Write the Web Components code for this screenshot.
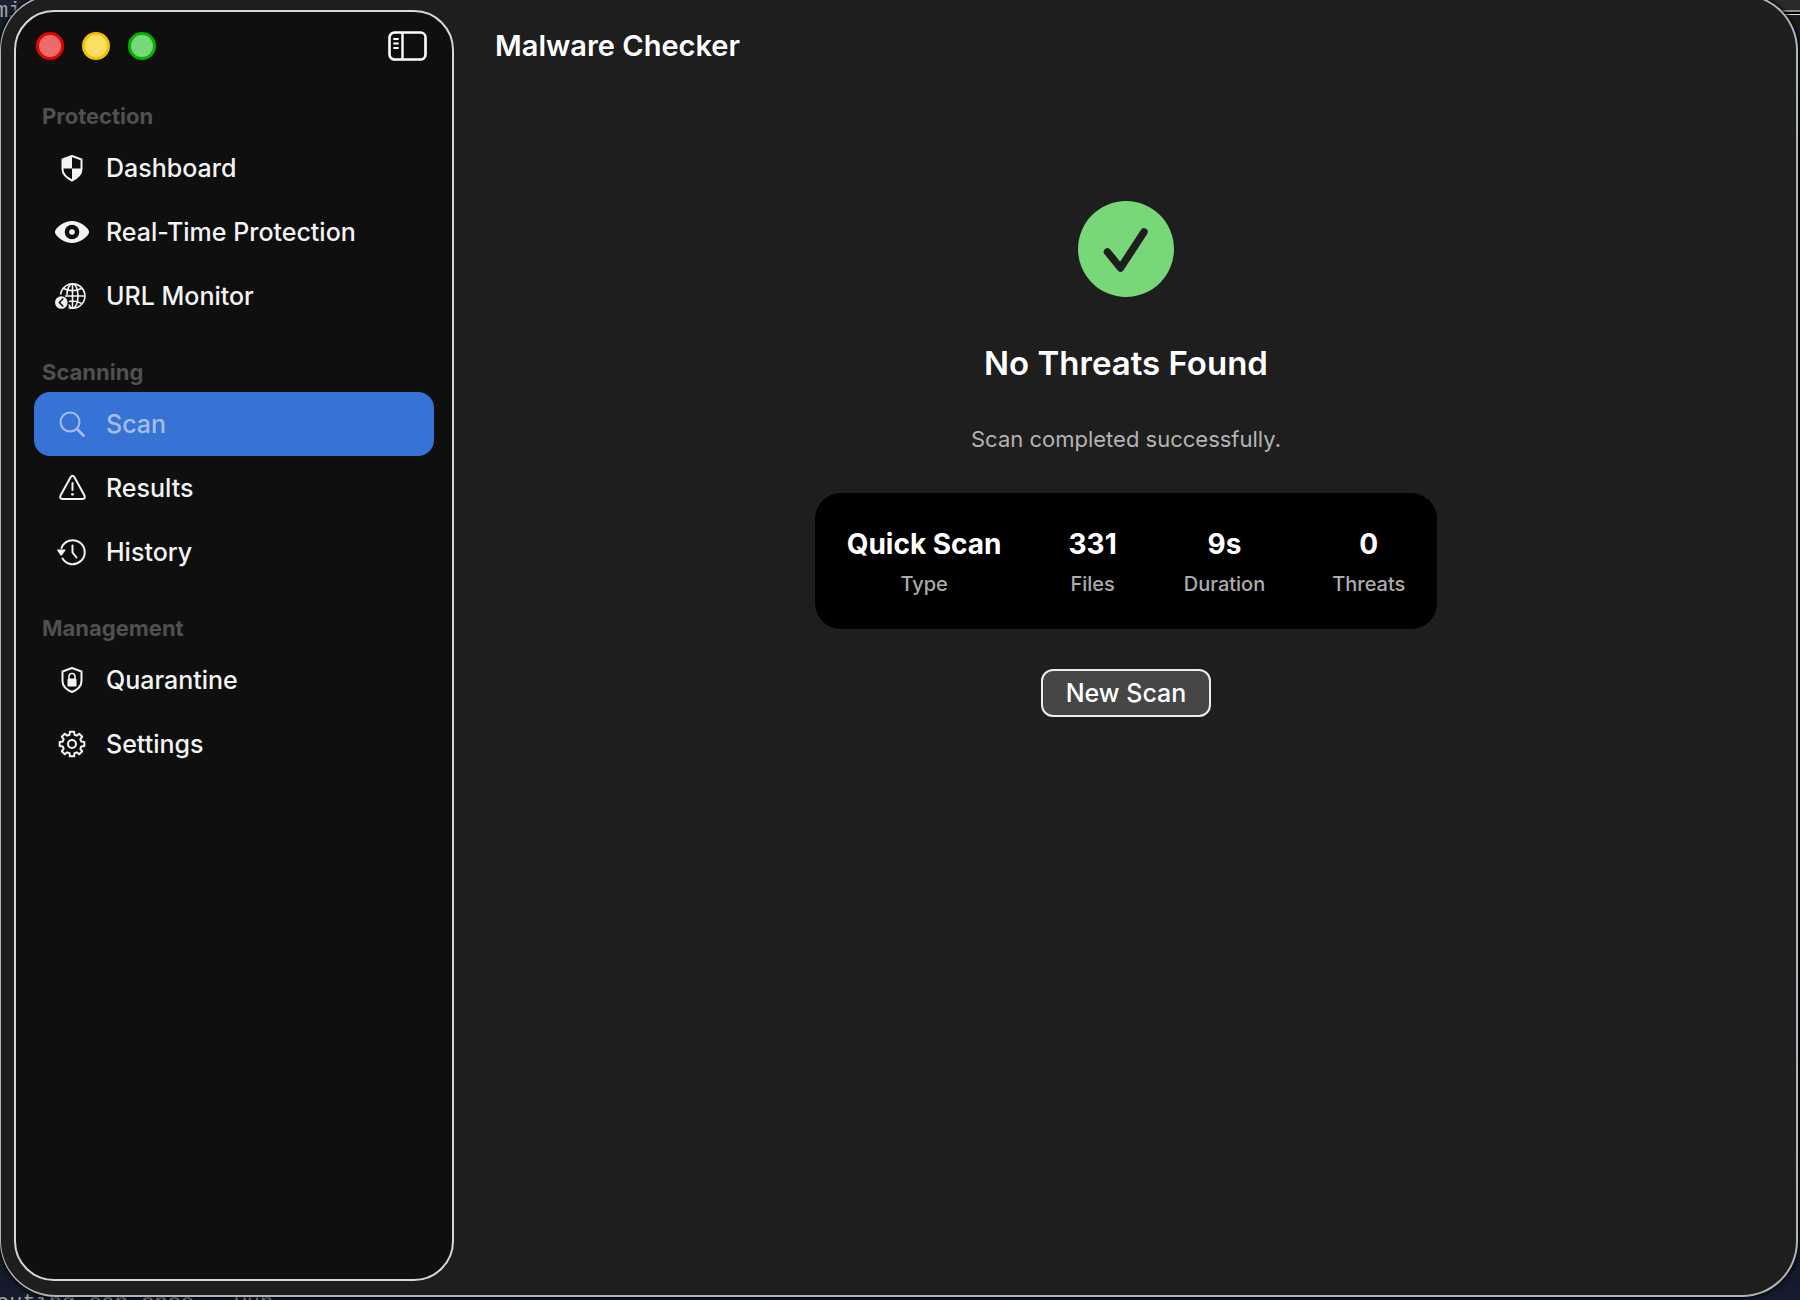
<!DOCTYPE html>
<html lang="en">
<head>
<meta charset="utf-8">
<title>Malware Checker</title>
<style>
  html, body { margin: 0; height: 100%; overflow: hidden; background: #0b0f18; }
  body { font-family: Inter, "Liberation Sans", sans-serif; color: #fff; }
  mc-desktop { height: 100%; }
</style>
</head>
<body>
<mc-desktop>
  <mc-window>
    <mc-sidebar slot="sidebar">
      <mc-group label="Protection">
        <mc-item icon="shield">Dashboard</mc-item>
        <mc-item icon="eye">Real-Time Protection</mc-item>
        <mc-item icon="globe">URL Monitor</mc-item>
      </mc-group>
      <mc-group label="Scanning">
        <mc-item icon="search" selected>Scan</mc-item>
        <mc-item icon="warning">Results</mc-item>
        <mc-item icon="history">History</mc-item>
      </mc-group>
      <mc-group label="Management">
        <mc-item icon="lock">Quarantine</mc-item>
        <mc-item icon="gear">Settings</mc-item>
      </mc-group>
    </mc-sidebar>
    <mc-result>
      <span slot="title">No Threats Found</span>
      <span slot="message">Scan completed successfully.</span>
      <mc-stat label="Type">Quick Scan</mc-stat>
      <mc-stat label="Files">331</mc-stat>
      <mc-stat label="Duration">9s</mc-stat>
      <mc-stat label="Threats">0</mc-stat>
    </mc-result>
  </mc-window>
</mc-desktop>

<script>
/* Outline of an eight-toothed cog. */
function gearPath(cx, cy, outer, inner) {
  const pts = [];
  for (let i = 0; i < 8; i++) {
    const a = i * Math.PI / 4;
    for (const [da, r] of [[-0.26, inner], [-0.17, outer], [0.17, outer], [0.26, inner]]) {
      pts.push((cx + r * Math.sin(a + da)).toFixed(2) + " " + (cy - r * Math.cos(a + da)).toFixed(2));
    }
  }
  return "M" + pts.join(" L") + " Z";
}

const ICONS = {
  shield: `<path d="M20 8 L29.5 11.5 V21 C29.5 26.5 25 30 20 32.5 C15 30 10.5 26.5 10.5 21 V11.5 Z" fill="none" stroke="currentColor" stroke-width="2" stroke-linejoin="round"/><path d="M20 8 V20.5 H10.5 V11.5 Z M20 20.5 H29.5 V21 C29.5 26.5 25 30 20 32.5 Z" fill="currentColor"/>`,
  eye: `<path fill-rule="evenodd" fill="currentColor" d="M20 9 C28 9 34.5 14.5 36.6 18.2 Q37.6 20 36.6 21.8 C34.5 25.5 28 31 20 31 C12 31 5.5 25.5 3.4 21.8 Q2.4 20 3.4 18.2 C5.5 14.5 12 9 20 9 Z M20 12.7 A7.3 7.3 0 1 0 20 27.3 A7.3 7.3 0 1 0 20 12.7 Z"/><circle cx="20" cy="20" r="2.8" fill="currentColor"/>`,
  globe: `<g fill="none" stroke="currentColor" stroke-width="1.6"><path d="M8.6 18.5 A12.2 12.2 0 1 1 16.5 31.5"/><path d="M16.8 28.5 C18 31 19.5 32.2 20.5 32.2 C23.5 32.2 26 27 26 20 C26 13 23.5 7.8 20.5 7.8 C17.5 7.8 15 13 15 19"/><path d="M20.5 8 V32 M13 20 H32.5 M11.5 12.5 Q20.5 17 29.5 12.5 M17 25.5 Q23.5 24 29.5 27.5"/></g><circle cx="9.3" cy="26.5" r="6.3" fill="currentColor"/><path d="M10.8 23 L7.3 26.5 L10.8 30" fill="none" stroke="#0f0f0f" stroke-width="1.7" stroke-linecap="round" stroke-linejoin="round"/>`,
  search: `<g fill="none" stroke="currentColor" stroke-linecap="round"><circle cx="18" cy="18" r="9.5" stroke-width="2"/><path d="M25.2 25.2 L31.5 31.5" stroke-width="2.8"/></g>`,
  warning: `<path d="M18.7 9 Q20.5 6.4 22.3 9 L32.5 27.5 Q33.7 30.8 30.5 31 H10.5 Q7.3 30.8 8.5 27.5 Z" fill="none" stroke="currentColor" stroke-width="2" stroke-linejoin="round"/><path d="M20.5 15 V22" stroke="currentColor" stroke-width="2" stroke-linecap="round"/><circle cx="20.5" cy="26.3" r="1.4" fill="currentColor"/>`,
  history: `<g fill="none" stroke="currentColor" stroke-width="2" stroke-linecap="round" stroke-linejoin="round"><path d="M9.5 16 A12 12 0 1 1 10.5 26.5"/><path d="M20.5 13.5 V20.5 L24.5 25.5"/></g><path d="M5.5 17.5 H13 Q13.8 17.7 13.3 18.5 L10 23.2 Q9.2 24 8.5 23.2 L5.2 18.5 Q4.8 17.7 5.5 17.5 Z" fill="currentColor"/>`,
  lock: `<path d="M20 8 L29.5 11.5 V21 C29.5 26.5 25 30 20 32 C15 30 10.5 26.5 10.5 21 V11.5 Z" fill="none" stroke="currentColor" stroke-width="2" stroke-linejoin="round"/><rect x="15.5" y="18.5" width="9" height="8" rx="1.2" fill="currentColor"/><path d="M17 19 V16.5 A3 3 0 0 1 23 16.5 V19" fill="none" stroke="currentColor" stroke-width="1.6"/>`,
  gear: `<g fill="none" stroke="currentColor" stroke-width="2" stroke-linejoin="round"><path d="${gearPath(20, 20, 12.5, 9.6)}"/><circle cx="20" cy="20" r="4"/></g>`
};

function define(name, render) {
  customElements.define(name, class extends HTMLElement {
    connectedCallback() {
      if (this.shadowRoot) return;
      this.attachShadow({ mode: "open" }).innerHTML = render(this);
    }
  });
}

define("mc-desktop", () => `
  <style>
    :host { display: grid; position: relative; overflow: hidden;
      background: linear-gradient(#1a2130, #05091a 10%, #05070f 80%, #161c2e); }
    .behind { position: absolute; font: 22px/24px "Liberation Mono", monospace; color: #a4a4a4; white-space: pre; }
    .top { top: 0; left: -5px; }
    .bottom { bottom: -16px; left: -4px; }
    .edge { position: absolute; top: 0; right: 0; width: 60px; height: 28px;
      background: linear-gradient(#2b2b2b 10px, #8a8a8a 10px 12px, #000 12px 14px, #e0e0e0 14px 15px, #1c1c1c 15px); }
    ::slotted(*) { position: relative; }
  </style>
  <div class="edge"></div>
  <div class="behind top" aria-hidden="true">mi</div>
  <div class="behind bottom" aria-hidden="true">outing can once.  Run</div>
  <slot></slot>`);

define("mc-window", () => `
  <style>
    :host { display: flex; box-sizing: border-box; margin: -6px 2px 3px 0; padding: 14px 0 14px 13px;
      background: #1e1e1e; border: 2px solid #b4b4b4; border-left-width: 1px; border-radius: 56px; box-shadow: 0 0 4px 1px #000; }
    main { flex: 1; display: flex; flex-direction: column; padding-left: 2px; }
    header { height: 72px; display: flex; align-items: center; padding-left: 39px; }
    h1 { margin: 0; font-size: 29px; line-height: 36px; font-weight: 600; }
  </style>
  <slot name="sidebar"></slot>
  <main><header><h1>Malware Checker</h1></header><slot></slot></main>`);

define("mc-sidebar", () => `
  <style>
    :host { display: flex; flex-direction: column; box-sizing: border-box; width: 440px; padding: 0 18px;
      background: #0f0f0f; border: 2px solid #d8d8d8; border-radius: 40px; }
    .bar { display: flex; align-items: center; justify-content: space-between; height: 68px; padding: 0 6px 0 2px; }
    .lights { display: flex; gap: 18px; }
    button { padding: 0; border: 0; background: none; color: inherit; font: inherit; }
    .light { box-sizing: border-box; width: 28px; height: 28px; border-radius: 50%; border: 3px solid var(--rim); background: var(--fill); }
    .toggle, .toggle svg { display: block; }
    nav { display: flex; flex-direction: column; gap: 30px; padding-top: 22px; }
  </style>
  <div class="bar">
    <div class="lights">
      <button class="light" aria-label="Close" style="--rim:#e10600;--fill:#ed6b68"></button>
      <button class="light" aria-label="Minimize" style="--rim:#f5c000;--fill:#f9df66"></button>
      <button class="light" aria-label="Zoom" style="--rim:#05b200;--fill:#78d778"></button>
    </div>
    <button class="toggle" aria-label="Toggle sidebar">
      <svg width="40" height="32" viewBox="0 0 40 32" fill="none" stroke="#fff">
        <rect x="1.5" y="2.5" width="36" height="27" rx="5" stroke-width="2.6"/>
        <path d="M14.5 2.5 V29.5" stroke-width="2.4"/>
        <path d="M6 9 H10 M6 13.5 H10 M6 18 H10" stroke-width="1.8" stroke-linecap="round"/>
      </svg>
    </button>
  </div>
  <nav><slot></slot></nav>`);

define("mc-group", el => `
  <style>
    :host { display: block; }
    h2 { margin: 0; padding: 0 8px 6px; font-size: 22px; line-height: 28px; font-weight: 700; color: #505050; }
  </style>
  <h2>${el.getAttribute("label")}</h2><slot></slot>`);

define("mc-item", el => `
  <style>
    :host { display: block; color: #f4f4f4; }
    a { display: flex; align-items: center; gap: 14px; height: 64px; padding-left: 18px; border-radius: 16px;
      font-size: 25px; line-height: 32px; font-weight: 500; color: inherit; text-decoration: none; }
    :host([selected]) { color: #a5bee9; }
    :host([selected]) a { background: #3772d5; }
    svg { flex: none; }
  </style>
  <a href="#"><svg width="40" height="40" viewBox="0 0 40 40" aria-hidden="true">${ICONS[el.getAttribute("icon")]}</svg><slot></slot></a>`);

define("mc-stat", el => `
  <style>
    :host { display: flex; flex-direction: column; align-items: center; gap: 10px; }
    strong { font-size: 28px; line-height: 36px; font-weight: 700; }
    span { font-size: 20px; line-height: 24px; font-weight: 500; color: #acacac; }
  </style>
  <strong><slot></slot></strong><span>${el.getAttribute("label")}</span>`);

define("mc-result", () => `
  <style>
    :host { display: flex; flex-direction: column; align-items: center; padding-top: 119px; }
    .check { display: block; }
    h2 { margin: 44px 0 0; font-size: 33px; line-height: 44px; font-weight: 600; }
    p { margin: 40px 0 0; font-size: 22px; line-height: 28px; color: #b4b4b4; }
    .card { display: flex; gap: 67px; margin-top: 40px; padding: 33px 32px; border-radius: 26px; background: #000; }
    button { margin-top: 40px; padding: 0 23px; height: 48px; border: 2px solid #ededed; border-radius: 12px;
      background: #464646; color: #fff; font-family: inherit; font-size: 25px; line-height: 32px; font-weight: 500; }
  </style>
  <svg class="check" width="96" height="96" viewBox="0 0 96 96" aria-hidden="true">
    <circle cx="48" cy="48" r="48" fill="#78d778"/>
    <path d="M29.5 51 L42.5 67 L66 31" fill="none" stroke="#1e1e1e" stroke-width="7.5" stroke-linecap="round" stroke-linejoin="round"/>
  </svg>
  <h2><slot name="title"></slot></h2>
  <p><slot name="message"></slot></p>
  <div class="card"><slot></slot></div>
  <button>New Scan</button>`);
</script>
</body>
</html>
